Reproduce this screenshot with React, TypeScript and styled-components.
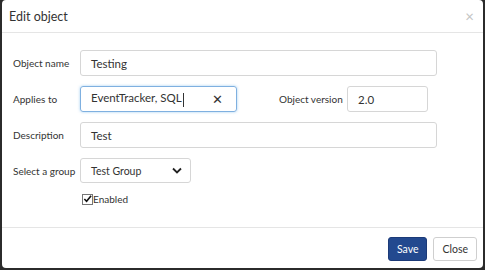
import React from "react";
import styled, { createGlobalStyle } from "styled-components";

const GlobalStyle = createGlobalStyle`
  html, body {
    margin: 0;
    padding: 0;
    background: #2b2b2b;
  }
  body {
    font-family: Lato, "Noto Sans", sans-serif;
    color: #333;
  }
`;

const Modal = styled.div`
  box-sizing: border-box;
  width: 481px;
  height: 268px;
  margin: 0 2px 2px 2px;
  background: #fff;
  border-radius: 4px;
  display: flex;
  flex-direction: column;
`;

const Header = styled.div`
  height: 33px;
  box-sizing: border-box;
  border-bottom: 1px solid #e5e5e5;
  display: flex;
  align-items: center;
  justify-content: space-between;
  padding: 1px 9px 0 7px;
`;

const Title = styled.h4`
  margin: 0;
  font-size: 12.5px;
  font-weight: 400;
  color: #333;
`;

const CloseX = styled.span`
  color: #c4c4c4;
  font-size: 15px;
  line-height: 1;
`;

const Body = styled.div`
  flex: 1;
  padding: 17px 0 0 11px;
  display: flex;
  flex-direction: column;
  gap: 10px;
`;

const Row = styled.div`
  display: flex;
  align-items: center;
`;

const Label = styled.label<{ $width?: number }>`
  width: ${({ $width }) => $width ?? 67}px;
  font-size: 10px;
  color: #333;
  white-space: nowrap;
`;

const Field = styled.div<{ $width: number; $focus?: boolean; $height?: number; $small?: boolean }>`
  box-sizing: border-box;
  width: ${({ $width }) => $width}px;
  height: ${({ $height }) => $height ?? 26}px;
  border: 1px solid ${({ $focus }) => ($focus ? "#7fb0e0" : "#d6d6d6")};
  box-shadow: ${({ $focus }) => ($focus ? "0 0 3px rgba(102,175,233,0.6)" : "none")};
  border-radius: 3px;
  display: flex;
  align-items: center;
  justify-content: space-between;
  padding: 0 8px 0 10px;
  font-size: ${({ $small }) => ($small ? 10.5 : 11.5)}px;
  color: #333;
`;

const Caret = styled.span`
  display: inline-block;
  width: 1px;
  height: 14px;
  background: #333;
  margin-left: 1px;
  vertical-align: middle;
`;

const Clear = styled.span`
  font-size: 13px;
  color: #333;
  margin-right: 5px;
`;

const Spacer = styled.div<{ $w: number }>`
  width: ${({ $w }) => $w}px;
`;

const CheckRow = styled.div`
  display: flex;
  align-items: center;
  padding-left: 69px;
  font-size: 10px;
`;

const Box = styled.span`
  box-sizing: border-box;
  width: 11px;
  height: 11px;
  border: 1px solid #777;
  display: inline-flex;
  align-items: center;
  justify-content: center;
  background: #fff;
`;

const Footer = styled.div`
  height: 41px;
  box-sizing: border-box;
  border-top: 1px solid #e5e5e5;
  display: flex;
  align-items: center;
  justify-content: flex-end;
  gap: 6px;
  padding: 2px 6px 0 0;
`;

const Button = styled.button<{ $primary?: boolean }>`
  box-sizing: border-box;
  height: 24px;
  padding: 0 8px;
  font-family: Lato, "Noto Sans", sans-serif;
  font-size: 10.5px;
  border-radius: 3px;
  border: 1px solid ${({ $primary }) => ($primary ? "#1c3a78" : "#cfcfcf")};
  background: ${({ $primary }) => ($primary ? "#23498f" : "#fff")};
  color: ${({ $primary }) => ($primary ? "#fff" : "#333")};
`;

export default function App() {
  return (
    <>
      <GlobalStyle />
      <Modal>
        <Header>
          <Title>Edit object</Title>
          <CloseX>×</CloseX>
        </Header>
        <Body>
          <Row>
            <Label>Object name</Label>
            <Field $width={357}>Testing</Field>
          </Row>
          <Row>
            <Label>Applies to</Label>
            <Field $width={157} $focus>
              <span>
                EventTracker, SQL<Caret />
              </span>
              <Clear>✕</Clear>
            </Field>
            <Spacer $w={42} />
            <Label $width={68}>Object version</Label>
            <Field $width={81}>2.0</Field>
          </Row>
          <Row>
            <Label>Description</Label>
            <Field $width={357}>Test</Field>
          </Row>
          <Row>
            <Label>Select a group</Label>
            <Field $width={111} $height={25} $small>
              <span>Test Group</span>
              <svg width="10" height="7" viewBox="0 0 10 7">
                <path d="M1 1.5l4 4 4-4" fill="none" stroke="#222" strokeWidth="1.8" />
              </svg>
            </Field>
          </Row>
          <CheckRow>
            <Box>
              <svg width="10" height="10" viewBox="0 0 10 10">
                <path d="M1.5 5l2.5 2.5L9 1.5" fill="none" stroke="#111" strokeWidth="1.8" />
              </svg>
            </Box>
            <span>Enabled</span>
          </CheckRow>
        </Body>
        <Footer>
          <Button $primary>Save</Button>
          <Button>Close</Button>
        </Footer>
      </Modal>
    </>
  );
}
